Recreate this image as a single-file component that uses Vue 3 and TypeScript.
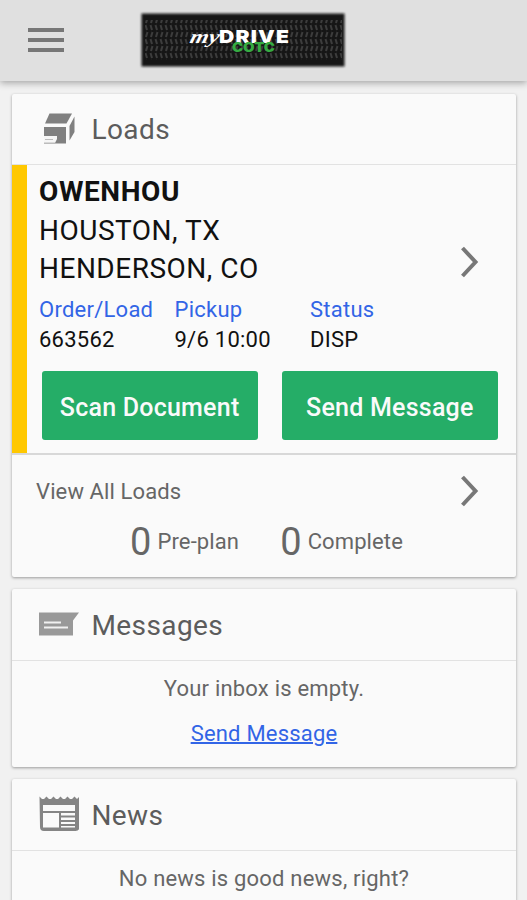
<script setup lang="ts">
interface Field {
  label: string
  value: string
}
interface Count {
  total: number
  label: string
}

const stops: string[] = ['HOUSTON, TX', 'HENDERSON, CO']
const fields: Field[] = [
  { label: 'Order/Load', value: '663562' },
  { label: 'Pickup', value: '9/6 10:00' },
  { label: 'Status', value: 'DISP' },
]
const actions: string[] = ['Scan Document', 'Send Message']
const counts: Count[] = [
  { total: 0, label: 'Pre-plan' },
  { total: 0, label: 'Complete' },
]
</script>

<template>
  <div class="screen">
    <header class="bar">
      <button class="menu" aria-label="Menu"><i /><i /><i /></button>
      <svg class="logo" width="212" height="60" viewBox="0 0 212 60">
        <defs>
          <pattern id="tread" width="5" height="14" patternUnits="userSpaceOnUse">
            <path d="M1.500 1l1.500 5M3.500 8l-1.500 5" stroke="#3c3c3c" stroke-width="2" fill="none" />
          </pattern>
          <filter id="soft" x="-5%" y="-15%" width="110%" height="130%">
            <feGaussianBlur stdDeviation="1.3" />
          </filter>
          <filter id="grain">
            <feGaussianBlur stdDeviation="0.6" />
          </filter>
        </defs>
        <rect x="2.500" y="3.500" width="203" height="53" fill="#151515" filter="url(#soft)" />
        <rect x="6" y="10" width="197" height="40" fill="url(#tread)" filter="url(#grain)" />
        <text class="my" transform="translate(50 33) skewX(-14)" textLength="29" lengthAdjust="spacingAndGlyphs">my</text>
        <text class="drive" x="80" y="32.500" textLength="71" lengthAdjust="spacingAndGlyphs">DRIVE</text>
        <text class="cotc" x="93" y="42" textLength="43" lengthAdjust="spacingAndGlyphs">COTC</text>
      </svg>
    </header>

    <main class="cards">
      <section class="card">
        <div class="head">
          <svg class="icon" width="40" height="40" viewBox="0 0 40 40">
            <path d="M10.500 3.500H33L27.500 13.500H6z" fill="#808080" />
            <path d="M35.500 6.500v15.500l-5 8.500V16z" fill="#808080" />
            <path d="M5 17h22V33.500H5z" fill="#808080" />
            <path d="M5 26h13v3l-2 4H5z" fill="#f6f6f6" />
            <path d="M6 29.500h8M5 33h11" stroke="#bbb" />
          </svg>
          <h2>Loads</h2>
        </div>
        <div class="load">
          <div class="route">
            <div class="stops">
              <strong>OWENHOU</strong>
              <span v-for="stop in stops" :key="stop">{{ stop }}</span>
            </div>
            <svg class="chevron" width="20" height="34" viewBox="0 0 20 34"><path d="M2.500 3l13 14-13 14" /></svg>
          </div>
          <dl class="fields">
            <div v-for="field in fields" :key="field.label">
              <dt>{{ field.label }}</dt>
              <dd>{{ field.value }}</dd>
            </div>
          </dl>
          <div class="actions">
            <button v-for="action in actions" :key="action">{{ action }}</button>
          </div>
        </div>
        <div class="all">
          <div class="all-row">
            <span>View All Loads</span>
            <svg class="chevron" width="20" height="34" viewBox="0 0 20 34"><path d="M2.500 3l13 14-13 14" /></svg>
          </div>
          <div class="counts">
            <div v-for="count in counts" :key="count.label" class="count">
              <b>{{ count.total }}</b><span>{{ count.label }}</span>
            </div>
          </div>
        </div>
      </section>

      <section class="card messages">
        <div class="head">
          <svg class="icon" width="40" height="40" viewBox="0 0 40 40">
            <path d="M0 6.500h40l-6 8v15H0z" fill="#999" />
            <path d="M5 16.500h17M5 21.500h24" stroke="#f0f0f0" stroke-width="2" />
          </svg>
          <h2>Messages</h2>
        </div>
        <div class="empty">
          <p>Your inbox is empty.</p>
          <a>Send Message</a>
        </div>
      </section>

      <section class="card news">
        <div class="head">
          <svg class="icon" width="40" height="40" viewBox="0 0 40 40">
            <path
              fill="#858585"
              fill-rule="evenodd"
              d="M0.500 0.500l2.500 2.500h2l2.500-2.500 2.500 2.500h2l2.500-2.500 2.500 2.500h2l2.500-2.500 2.500 2.500h2l2.500-2.500 2.500 2.500h2l2.500-2.500 2.500 2.500 2.500-2.500v30.500q0 4-4 4h-31.500q-4 0-4-4zM4 9v6h32v-6zM4 17v14.500h16V17zM22 17v2.500h14v-2.500zM22 21.500v2.500h14v-2.500zM22 26v2h14v-2zM22 30v1.500h14V30z"
            />
          </svg>
          <h2>News</h2>
        </div>
        <div class="empty">
          <p>No news is good news, right?</p>
        </div>
      </section>
    </main>
  </div>
</template>

<style>
body {
  background: #f1f1f1;
  overflow: hidden;
}
</style>

<style scoped>
.screen {
  height: 900px;
  overflow: hidden;
  font-family: Roboto, sans-serif;
  color: #666;
  background: #f1f1f1;
}
button {
  border: 0;
  font-family: inherit;
}
.bar {
  position: relative;
  display: flex;
  align-items: flex-start;
  height: 81px;
  background: #e0e0e0;
  box-shadow: 0 2px 7px rgba(0, 0, 0, 0.32);
}
.menu {
  display: flex;
  flex-direction: column;
  gap: 6px;
  padding: 0;
  margin: 28px 0 0 28px;
  background: none;
}
.menu i {
  width: 36px;
  height: 4px;
  background: #777;
}
.logo {
  margin: 10px 0 0 75px;
}
.my {
  font: italic 700 19px 'Liberation Serif', serif;
  fill: #fff;
}
.drive {
  font: 900 18px Inter, sans-serif;
  letter-spacing: 1px;
  fill: #fff;
}
.cotc {
  font: 900 13.500px Inter, sans-serif;
  fill: #35ab42;
}
.cards {
  display: flex;
  flex-direction: column;
  gap: 12px;
  padding: 13px 11px 0 12px;
}
.card {
  background: #fafafa;
  border-radius: 2px;
  box-shadow: 0 1px 3px rgba(0, 0, 0, 0.36);
}
.head {
  box-sizing: border-box;
  display: flex;
  align-items: center;
  gap: 13px;
  height: 71px;
  padding: 2px 0 0 26.500px;
  border-bottom: 1.5px solid #e2e2e2;
}
.messages .head,
.news .head {
  height: 72px;
  padding-top: 2px;
}
h2 {
  margin: 0;
  font-size: 28px;
  line-height: 36px;
  font-weight: 400;
  letter-spacing: 0.4px;
  color: #5c5c5c;
}
.load {
  box-sizing: border-box;
  height: 288px;
  padding: 8px 18px 0 12px;
  border-left: 15px solid #ffc800;
}
.route {
  display: flex;
  justify-content: space-between;
}
.stops {
  display: flex;
  flex-direction: column;
  font-size: 28px;
  line-height: 38.600px;
  letter-spacing: 0.500px;
  color: #111;
}
.stops strong {
  letter-spacing: 0.600px;
}
.chevron {
  fill: none;
  stroke: #777;
  stroke-width: 4;
}
.route .chevron {
  margin: 72px 18px 0 0;
}
.fields {
  display: grid;
  grid-template-columns: 135.500px 135.500px 1fr;
  margin: 6.500px 0 0;
  font-size: 22px;
  line-height: 30px;
  letter-spacing: 0.25px;
}
dt {
  color: #3265e6;
}
dd {
  margin: 0;
  color: #111;
}
.actions {
  display: flex;
  gap: 24px;
  margin: 16px 0 0 2.500px;
}
.actions button {
  flex: 1;
  height: 69px;
  padding: 3px 0 0;
  border-radius: 3px;
  background: #25ad67;
  color: #fafafa;
  font-size: 25px;
  font-weight: 500;
  letter-spacing: 0.23px;
}
.all {
  box-sizing: border-box;
  height: 124px;
  padding: 18px 36px 0 24px;
  border-top: 2px solid #d8d8d8;
  font-size: 22px;
  letter-spacing: 0.12px;
}
.all-row {
  display: flex;
  justify-content: space-between;
  align-items: center;
  height: 36px;
}
.counts {
  display: flex;
  gap: 41px;
  padding-left: 94px;
  margin-top: 11px;
}
.count {
  display: flex;
  align-items: center;
  gap: 6px;
  line-height: 44px;
}
.count b {
  font-size: 38px;
  font-weight: 400;
}
.messages,
.news {
  height: 178px;
}
.empty {
  display: flex;
  flex-direction: column;
  align-items: center;
  gap: 15px;
  padding-top: 13px;
  font-size: 22px;
  line-height: 30px;
  letter-spacing: 0.2px;
}
.empty p {
  margin: 0;
}
.empty a {
  color: #3265e6;
  text-decoration: underline;
  text-decoration-thickness: 1.5px;
}
</style>
